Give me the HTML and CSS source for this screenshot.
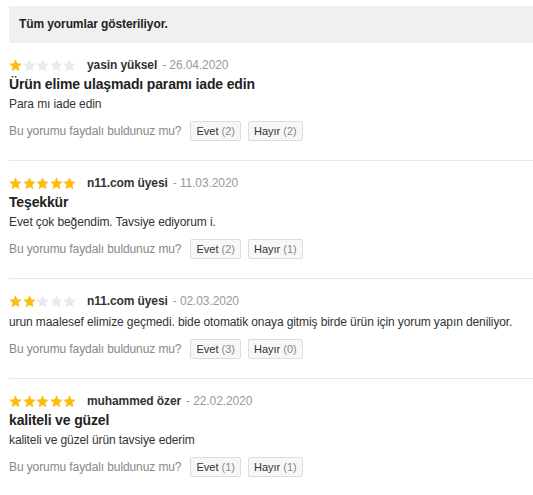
FILE: index.html
```html
<!DOCTYPE html>
<html lang="tr">

<head>
  <meta charset="UTF-8">
  <meta name="viewport" content="width=device-width, initial-scale=1.0">
  <title>Yorumlar</title>
  <link rel="stylesheet" href="styles.css">
</head>

<body>
  <svg width="0" height="0" style="position:absolute">
    <defs>
      <symbol id="star" viewBox="0 0 24 24">
        <polygon points="12,0.5 15.4,7.9 23.5,8.8 17.4,14.3 19.1,22.5 12,18.4 4.9,22.5 6.6,14.3 0.5,8.8 8.6,7.9" />
      </symbol>
    </defs>
  </svg>

  <div class="reviews">
    <div class="reviews-info">Tüm yorumlar gösteriliyor.</div>

    <div class="review">
      <div class="review-head">
        <span class="stars">
          <svg class="star on"><use href="#star" /></svg>
          <svg class="star"><use href="#star" /></svg>
          <svg class="star"><use href="#star" /></svg>
          <svg class="star"><use href="#star" /></svg>
          <svg class="star"><use href="#star" /></svg>
        </span>
        <span class="review-user">yasin yüksel</span>
        <span class="review-date">- 26.04.2020</span>
      </div>
      <h3 class="review-title">Ürün elime ulaşmadı paramı iade edin</h3>
      <p class="review-text">Para mı iade edin</p>
      <div class="review-helpful">
        <span class="helpful-label">Bu yorumu faydalı buldunuz mu?</span>
        <button class="vote-btn">Evet <span class="count">(2)</span></button>
        <button class="vote-btn">Hayır <span class="count">(2)</span></button>
      </div>
    </div>

    <div class="review">
      <div class="review-head">
        <span class="stars">
          <svg class="star on"><use href="#star" /></svg>
          <svg class="star on"><use href="#star" /></svg>
          <svg class="star on"><use href="#star" /></svg>
          <svg class="star on"><use href="#star" /></svg>
          <svg class="star on"><use href="#star" /></svg>
        </span>
        <span class="review-user">n11.com üyesi</span>
        <span class="review-date">- 11.03.2020</span>
      </div>
      <h3 class="review-title">Teşekkür</h3>
      <p class="review-text">Evet çok beğendim. Tavsiye ediyorum i.</p>
      <div class="review-helpful">
        <span class="helpful-label">Bu yorumu faydalı buldunuz mu?</span>
        <button class="vote-btn">Evet <span class="count">(2)</span></button>
        <button class="vote-btn">Hayır <span class="count">(1)</span></button>
      </div>
    </div>

    <div class="review">
      <div class="review-head">
        <span class="stars">
          <svg class="star on"><use href="#star" /></svg>
          <svg class="star on"><use href="#star" /></svg>
          <svg class="star"><use href="#star" /></svg>
          <svg class="star"><use href="#star" /></svg>
          <svg class="star"><use href="#star" /></svg>
        </span>
        <span class="review-user">n11.com üyesi</span>
        <span class="review-date">- 02.03.2020</span>
      </div>
      <p class="review-text no-title">urun maalesef elimize geçmedi. bide otomatik onaya gitmiş birde ürün için yorum yapın deniliyor.</p>
      <div class="review-helpful">
        <span class="helpful-label">Bu yorumu faydalı buldunuz mu?</span>
        <button class="vote-btn">Evet <span class="count">(3)</span></button>
        <button class="vote-btn">Hayır <span class="count">(0)</span></button>
      </div>
    </div>

    <div class="review">
      <div class="review-head">
        <span class="stars">
          <svg class="star on"><use href="#star" /></svg>
          <svg class="star on"><use href="#star" /></svg>
          <svg class="star on"><use href="#star" /></svg>
          <svg class="star on"><use href="#star" /></svg>
          <svg class="star on"><use href="#star" /></svg>
        </span>
        <span class="review-user">muhammed özer</span>
        <span class="review-date">- 22.02.2020</span>
      </div>
      <h3 class="review-title">kaliteli ve güzel</h3>
      <p class="review-text">kaliteli ve güzel ürün tavsiye ederim</p>
      <div class="review-helpful">
        <span class="helpful-label">Bu yorumu faydalı buldunuz mu?</span>
        <button class="vote-btn">Evet <span class="count">(1)</span></button>
        <button class="vote-btn">Hayır <span class="count">(1)</span></button>
      </div>
    </div>
  </div>
</body>

</html>
```

FILE: styles.css
```css
body {
  font-family: "Liberation Sans", Arial, sans-serif;
  font-size: 12px;
  letter-spacing: -0.1px;
  color: #333;
  margin: 0;
  padding: 6px 0 0 9px;
  background: #fff;
}

.reviews-info {
  height: 37px;
  line-height: 37px;
  padding-left: 10px;
  background: #f0f0f0;
  font-weight: bold;
  color: #222;
}

.review {
  padding: 13px 0 19px;
  border-top: 1px solid #e8e8e8;
}

.review:nth-child(2) {
  border-top: none;
}

.review-head {
  display: flex;
  align-items: center;
  height: 18px;
}

.stars {
  display: inline-flex;
  gap: 0.5px;
  margin-right: 11px;
}

.star {
  width: 13px;
  height: 13px;
  fill: #eaeaea;
}

.star.on {
  fill: #fcbd0f;
}

.review-user {
  font-weight: bold;
  color: #333;
}

.review-date {
  color: #999;
  margin-left: 5px;
}

.review-title {
  margin: 0;
  font-size: 14px;
  letter-spacing: -0.15px;
  line-height: 20px;
  color: #222;
}

.review-text {
  margin: 0;
  line-height: 20px;
  color: #333;
}

.review-text.no-title {
  margin-top: 2px;
}

.review-helpful {
  display: flex;
  align-items: center;
  margin-top: 7px;
  height: 20px;
}

.helpful-label {
  color: #888;
  margin-right: 9px;
}

.vote-btn {
  font-family: inherit;
  font-size: 11px;
  letter-spacing: 0;
  height: 20px;
  padding: 0 5px;
  margin-right: 7px;
  border: 1px solid #dcdcdc;
  border-radius: 2px;
  background: #f7f7f7;
  color: #333;
}

.vote-btn .count {
  color: #888;
}
```
